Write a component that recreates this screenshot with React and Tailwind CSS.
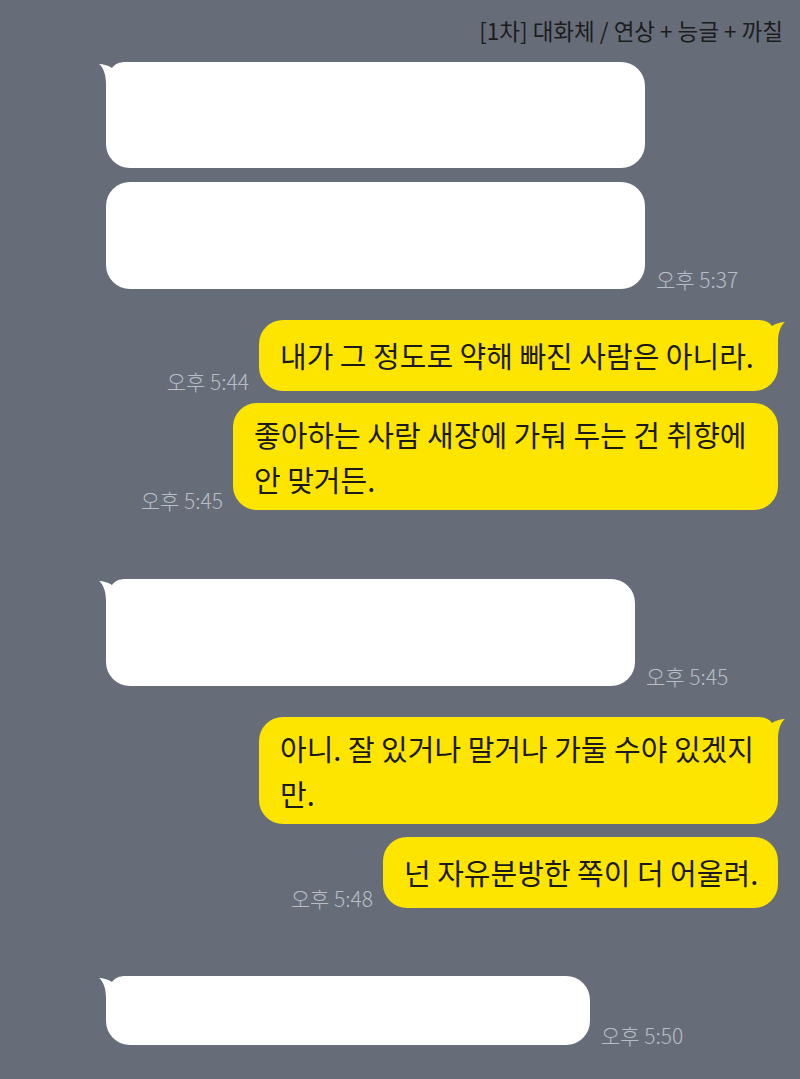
import React from "react";

function Tail({ color, flip }) {
  return (
    <svg
      width="32"
      height="32"
      viewBox="0 0 32 32"
      className={flip ? "absolute -right-[8px] top-0 -scale-x-100" : "absolute -left-[8px] top-0"}
      aria-hidden="true"
    >
      <path
        d="M1 2 C5 2 9 3 14 6 C17 2 21 0 28 0 L32 0 L32 32 L8 32 L8 22 C8 12 5 5 1 2 Z"
        fill={color}
      />
    </svg>
  );
}

function Time({ children }) {
  return (
    <span className="mb-[-1px] whitespace-nowrap text-[21px] font-light leading-[22px] text-[#b9bdc5]">{children}</span>
  );
}

function Received({ width, height, time, tail }) {
  return (
    <div className="flex items-end gap-[11px]">
      <div className={`relative rounded-[24px] bg-white ${width} ${height}`}>
        {tail && <Tail color="#ffffff" />}
      </div>
      {time && <Time>{time}</Time>}
    </div>
  );
}

function Sent({ width, height, time, tail, lines }) {
  return (
    <div className="flex items-end justify-end gap-[10px]">
      {time && <Time>{time}</Time>}
      <div className={`relative flex items-center rounded-[24px] bg-[#fee500] pl-[21px] ${width} ${height}`}>
        {tail && <Tail color="#fee500" flip />}
        <p className="relative text-[29px] leading-[45px] text-[#1a1a1a]">
          {lines.map((l, i) => (
            <span key={i} className="block whitespace-nowrap">
              {l}
            </span>
          ))}
        </p>
      </div>
    </div>
  );
}

export default function App() {
  return (
    <div className="h-[1079px] w-full overflow-hidden bg-[#666d79] font-['Noto_Sans_CJK_KR','Noto_Sans',sans-serif]">
      <div className="flex h-[62px] justify-end pr-[17px] pt-[16px]">
        <p className="text-[22.5px] leading-[28px] text-[#1c1c1e]">[1차] 대화체 / 연상 + 능글 + 까칠</p>
      </div>

      <div className="flex flex-col gap-[14px] pl-[106px]">
        <Received width="w-[539px]" height="h-[106px]" tail />
        <Received width="w-[539px]" height="h-[107px]" time="오후 5:37" />
      </div>

      <div className="mt-[31px] flex flex-col gap-[12px] pr-[22px]">
        <Sent width="w-[519px]" height="h-[71px]" time="오후 5:44" tail lines={["내가 그 정도로 약해 빠진 사람은 아니라."]} />
        <Sent
          width="w-[545px]"
          height="h-[107px]"
          time="오후 5:45"
          lines={["좋아하는 사람 새장에 가둬 두는 건 취향에", "안 맞거든."]}
        />
      </div>

      <div className="mt-[69px] flex flex-col pl-[106px]">
        <Received width="w-[529px]" height="h-[107px]" time="오후 5:45" tail />
      </div>

      <div className="mt-[31px] flex flex-col gap-[13px] pr-[22px]">
        <Sent
          width="w-[519px]"
          height="h-[107px]"
          tail
          lines={["아니. 잘 있거나 말거나 가둘 수야 있겠지", "만."]}
        />
        <Sent width="w-[395px]" height="h-[71px]" time="오후 5:48" lines={["넌 자유분방한 쪽이 더 어울려."]} />
      </div>

      <div className="mt-[68px] flex flex-col pl-[106px]">
        <Received width="w-[484px]" height="h-[69px]" time="오후 5:50" tail />
      </div>
    </div>
  );
}
